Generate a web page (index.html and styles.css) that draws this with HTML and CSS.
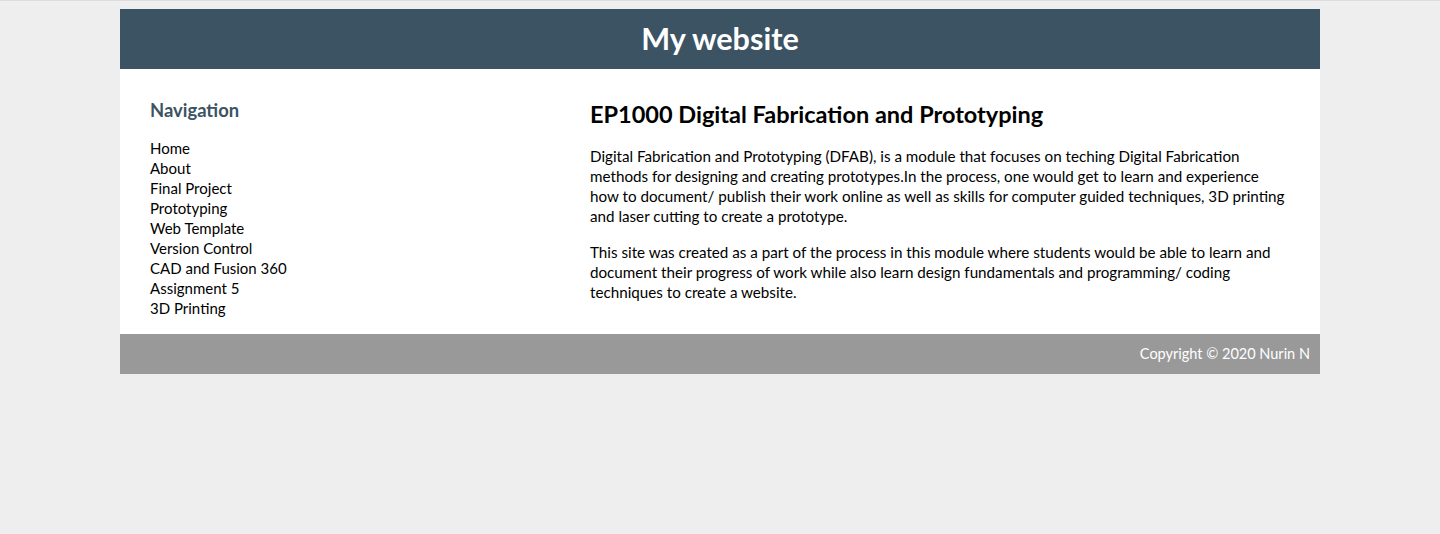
FILE: index.html
```html
<!DOCTYPE html>
<html lang="en">
<head>
<meta charset="utf-8">
<title>My website</title>
<link rel="stylesheet" href="styles.css">
</head>
<body>
<div class="page">
  <header class="site-header">
    <h1 class="site-title">My website</h1>
  </header>
  <main class="main">
    <nav class="nav">
      <h3 class="nav-title">Navigation</h3>
      <ul class="nav-list">
        <li>Home</li>
        <li>About</li>
        <li>Final Project</li>
        <li>Prototyping</li>
        <li>Web Template</li>
        <li>Version Control</li>
        <li>CAD and Fusion 360</li>
        <li>Assignment 5</li>
        <li>3D Printing</li>
      </ul>
    </nav>
    <section class="content">
      <h2 class="content-title">EP1000 Digital Fabrication and Prototyping</h2>
      <p class="para">Digital Fabrication and Prototyping (DFAB), is a module that focuses on teching Digital Fabrication methods for designing and creating prototypes.In the process, one would get to learn and experience how to document/ publish their work online as well as skills for computer guided techniques, 3D printing and laser cutting to create a prototype.</p>
      <p class="para">This site was created as a part of the process in this module where students would be able to learn and document their progress of work while also learn design fundamentals and programming/ coding techniques to create a website.</p>
    </section>
  </main>
  <footer class="site-footer">Copyright © 2020 Nurin N</footer>
</div>
</body>
</html>
```
FILE: styles.css
```css
html, body {
  margin: 0;
  padding: 0;
}
body {
  background: #eeeeee;
  border-top: 1px solid #dcdcdc;
  padding-top: 8px;
  font-family: "Lato", "Noto Sans", sans-serif;
  color: #000;
}
.page {
  width: 1200px;
  margin: 0 auto;
}
.site-header {
  background: #3b5363;
  height: 60px;
}
.site-title {
  margin: 0;
  color: #fff;
  font-size: 30.6px;
  line-height: 60px;
  font-weight: 700;
  text-align: center;
}
.main {
  background: #fff;
  display: grid;
  grid-template-columns: 440px 1fr;
  padding: 30px 30px 16px;
}
.nav-title {
  margin: 0;
  font-size: 18.4px;
  line-height: 22px;
  font-weight: 700;
  color: #3b5363;
}
.nav-list {
  list-style: none;
  margin: 17px 0 0;
  padding: 0;
  font-size: 15px;
  line-height: 20px;
}
.content-title {
  margin: 0;
  font-size: 23.5px;
  line-height: 30px;
  font-weight: 700;
}
.para {
  margin: 17px 0 0;
  font-size: 15.2px;
  line-height: 20px;
}
.para + .para {
  margin-top: 16px;
}
.site-footer {
  background: #999999;
  height: 40px;
  line-height: 40px;
  color: #fff;
  font-size: 14.5px;
  text-align: right;
  padding-right: 10px;
}
```
